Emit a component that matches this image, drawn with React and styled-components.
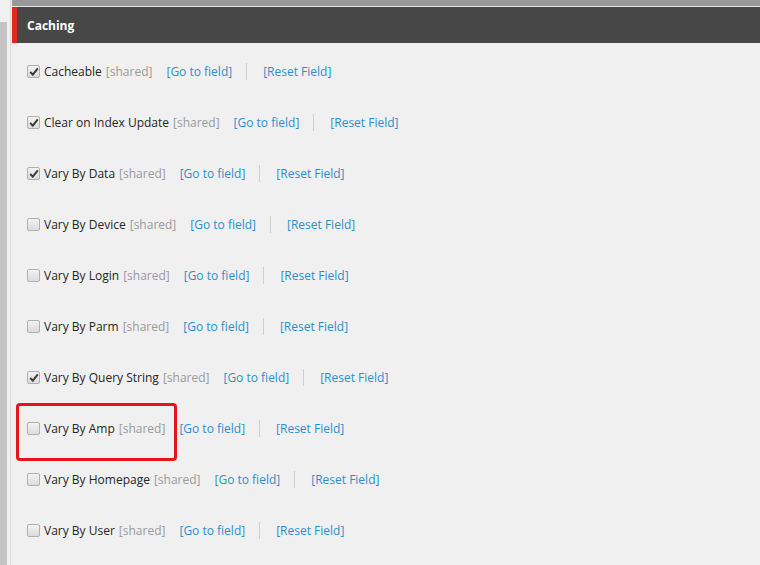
import React from "react";
import styled, { createGlobalStyle } from "styled-components";

const Global = createGlobalStyle`
  html, body { margin: 0; padding: 0; background: #f0f0f0; }
  body { font-family: "Open Sans", "Liberation Sans", sans-serif; }
`;

const Page = styled.div`
  display: flex;
  width: 760px;
  height: 565px;
  overflow: hidden;
  background: #f0f0f0;
`;

const Rail = styled.div`
  width: 7px;
  display: flex;
  flex-direction: column;
  flex-shrink: 0;
`;

const RailTop = styled.div`
  height: 22px;
  background: #f0f0f0;
`;

const RailBody = styled.div`
  flex: 1;
  background: #c4c4c4;
`;

const Gutter = styled.div`
  width: 3px;
  flex-shrink: 0;
  background: #f0f0f0;
  border-right: 1px solid #dadada;
  margin-right: 1px;
`;

const Main = styled.div`
  flex: 1;
  display: flex;
  flex-direction: column;
`;

const TopStrip = styled.div`
  height: 6px;
  background: #999999;
  border-bottom: 1px solid #e4e4e4;
`;

const Header = styled.div`
  height: 36px;
  background: #474747;
  border-left: 5px solid #dc291e;
  display: flex;
  align-items: center;
  padding-left: 10px;
  color: #ffffff;
  font-weight: 700;
  font-size: 12px;
`;

const List = styled.div`
  padding-top: 3px;
  padding-left: 15px;
  display: flex;
  flex-direction: column;
`;

const Row = styled.div`
  position: relative;
  height: 51px;
  display: flex;
  align-items: center;
  font-size: 12px;
  color: #262626;
`;

const Box = styled.span`
  width: 11px;
  height: 11px;
  border: 1px solid #b0b0b0;
  border-radius: 2px;
  background: linear-gradient(#f2f2f2, #dcdcdc);
  margin-right: 4px;
  display: inline-flex;
  align-items: center;
  justify-content: center;
  flex-shrink: 0;
`;

const Label = styled.span`
  white-space: nowrap;
`;

const Shared = styled.span`
  color: #9a9a9a;
  margin-left: 4px;
  white-space: nowrap;
`;

const Link = styled.a`
  color: #2c8fcc;
  text-decoration: none;
  white-space: nowrap;
  margin-left: ${(p) => p.$gap}px;
`;

const Sep = styled.span`
  width: 1px;
  height: 17px;
  background: #d0d0d0;
  margin-left: 14px;
`;

const Highlight = styled.div`
  position: absolute;
  left: -11px;
  top: 0;
  width: 155px;
  height: 52px;
  border: 3px solid #e8141b;
  border-radius: 4px;
  pointer-events: none;
`;

const Check = () => (
  <svg width="10" height="9" viewBox="0 0 10 9">
    <path d="M1.2 5 L3.8 7.6 L8.8 1.4" fill="none" stroke="#3a3a3a" strokeWidth="2" />
  </svg>
);

const fields = [
  ["Cacheable", true],
  ["Clear on Index Update", true],
  ["Vary By Data", true],
  ["Vary By Device", false],
  ["Vary By Login", false],
  ["Vary By Parm", false],
  ["Vary By Query String", true],
  ["Vary By Amp", false, true],
  ["Vary By Homepage", false],
  ["Vary By User", false],
];

export default function App() {
  return (
    <>
      <Global />
      <Page>
        <Rail>
          <RailTop />
          <RailBody />
        </Rail>
        <Gutter />
        <Main>
          <TopStrip />
          <Header>Caching</Header>
          <List>
            {fields.map(([name, checked, hl]) => (
              <Row key={name}>
                <Box>{checked && <Check />}</Box>
                <Label>{name}</Label>
                <Shared>[shared]</Shared>
                <Link $gap={14}>[Go to field]</Link>
                <Sep />
                <Link $gap={16}>[Reset Field]</Link>
                {hl && <Highlight />}
              </Row>
            ))}
          </List>
        </Main>
      </Page>
    </>
  );
}
